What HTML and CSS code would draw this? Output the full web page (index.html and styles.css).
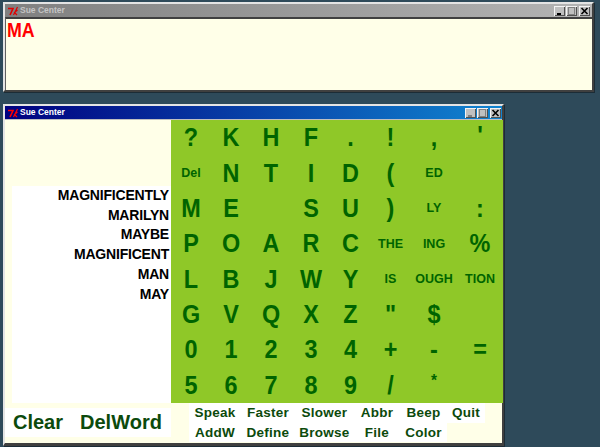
FILE: index.html
```html
<!DOCTYPE html>
<html lang="en">
<head>
<meta charset="utf-8">
<title>Sue Center</title>
<link rel="stylesheet" href="styles.css">
</head>
<body>
<section class="window window-top">
  <header class="titlebar inactive">
    <svg class="tk" viewBox="0 0 12 10" width="12" height="10"><path d="M1 2.5H6L3 9" fill="none" stroke="#e00000" stroke-width="1.6"/><path d="M10.5 1L6.5 9M10.5 4L7.5 6.5L10 9" fill="none" stroke="#e00000" stroke-width="1.2"/></svg>
    <span class="title">Sue Center</span>
    <div class="controls">
      <span class="ctl"><svg viewBox="0 0 11 10" width="11" height="10"><path d="M3 8H7" stroke="#000" stroke-width="2"/></svg></span>
      <span class="ctl"><svg viewBox="0 0 11 10" width="11" height="10"><rect x="2.5" y="1.5" width="6" height="7" fill="none" stroke="#808080"/></svg></span>
      <span class="ctl close"><svg viewBox="0 0 11 10" width="11" height="10"><path d="M2.5 2L8.5 8M8.5 2L2.5 8" stroke="#000" stroke-width="1.6"/></svg></span>
    </div>
  </header>
  <div class="entry"><span class="entry-text">MA</span></div>
</section>

<section class="window window-main">
  <header class="titlebar active">
    <svg class="tk" viewBox="0 0 12 10" width="12" height="10"><path d="M1 2.5H6L3 9" fill="none" stroke="#ff0000" stroke-width="1.6"/><path d="M10.5 1L6.5 9M10.5 4L7.5 6.5L10 9" fill="none" stroke="#ff0000" stroke-width="1.2"/></svg>
    <span class="title">Sue Center</span>
    <div class="controls">
      <span class="ctl"><svg viewBox="0 0 11 10" width="11" height="10"><path d="M3 8H7" stroke="#808080" stroke-width="2"/></svg></span>
      <span class="ctl"><svg viewBox="0 0 11 10" width="11" height="10"><rect x="2.5" y="1.5" width="6" height="7" fill="none" stroke="#808080"/></svg></span>
      <span class="ctl close"><svg viewBox="0 0 11 10" width="11" height="10"><path d="M2.5 2L8.5 8M8.5 2L2.5 8" stroke="#000" stroke-width="1.6"/></svg></span>
    </div>
  </header>
  <div class="body">
    <div class="left">
      <div class="left-top"></div>
      <ul class="words">
        <li>MAGNIFICENTLY</li>
        <li>MARILYN</li>
        <li>MAYBE</li>
        <li>MAGNIFICENT</li>
        <li>MAN</li>
        <li>MAY</li>
      </ul>
      <div class="actions-wrap">
        <div class="actions"><span>Clear</span><span>DelWord</span></div>
      </div>
    </div>
    <div class="right">
      <div class="keys">
        <span>?</span><span>K</span><span>H</span><span>F</span><span>.</span><span>!</span><span>,</span><span class="hi">'</span>
        <span class="sm">Del</span><span>N</span><span>T</span><span>I</span><span>D</span><span>(</span><span class="sm">ED</span><span></span>
        <span>M</span><span>E</span><span></span><span>S</span><span>U</span><span>)</span><span class="sm">LY</span><span>:</span>
        <span>P</span><span>O</span><span>A</span><span>R</span><span>C</span><span class="sm">THE</span><span class="sm">ING</span><span>%</span>
        <span>L</span><span>B</span><span>J</span><span>W</span><span>Y</span><span class="sm">IS</span><span class="sm">OUGH</span><span class="sm">TION</span>
        <span>G</span><span>V</span><span>Q</span><span>X</span><span>Z</span><span>"</span><span>$</span><span></span>
        <span>0</span><span>1</span><span>2</span><span>3</span><span>4</span><span>+</span><span>-</span><span>=</span>
        <span>5</span><span>6</span><span>7</span><span>8</span><span>9</span><span>/</span><span class="star">*</span><span></span>
      </div>
      <div class="commands">
        <span>Speak</span><span>Faster</span><span>Slower</span><span>Abbr</span><span>Beep</span><span>Quit</span>
        <span>AddW</span><span>Define</span><span>Browse</span><span>File</span><span>Color</span>
      </div>
    </div>
  </div>
</section>
</body>
</html>
```

FILE: styles.css
```css
* { box-sizing: border-box; }
html, body { margin: 0; padding: 0; }
body {
  position: relative;
  width: 600px;
  height: 447px;
  overflow: hidden;
  background: #2e4a5a;
  font-family: "Liberation Sans", Arial, sans-serif;
}
.window {
  position: absolute;
  left: 3px;
  display: flex;
  flex-direction: column;
  background: #c0c0c0;
  border: 2px solid;
  border-color: #e4e4e4 #404040 #404040 #e4e4e4;
  box-shadow: 1px 1px 0 #1c2c36;
}
.window-top { top: 2px; width: 591px; height: 90px; }
.window-main { top: 104px; width: 501px; height: 342px; border-bottom-width: 3px; }
.titlebar {
  height: 13px;
  flex: none;
  display: flex;
  align-items: center;
  padding: 0 2px;
  color: #fff;
}
.titlebar.inactive { background: linear-gradient(90deg, #808080, #b4b4b4); color: #c4c4c4; }
.titlebar.active { background: linear-gradient(90deg, #000080, #1084d0); margin-bottom: 1px; padding-right: 1px; }
.tk { flex: none; }
.title { margin-left: 1px; font-size: 8.5px; font-weight: bold; line-height: 13px; }
.controls { margin-left: auto; display: flex; gap: 1px; }
.ctl {
  width: 11px;
  height: 10px;
  background: #c0c0c0;
  display: block;
  box-shadow: inset 1px 1px 0 #f4f4f4, inset -1px -1px 0 #505050;
}
.ctl svg { display: block; }
.ctl.close { margin-left: 1px; }
.entry {
  flex: 1;
  background: #ffffe8;
  border-top: 2px solid #404040;
  border-left: 1px solid #606060;
  color: #ff0000;
  font-size: 21px;
  font-weight: bold;
  line-height: 22px;
  padding-left: 1px;
}
.entry-text { display: inline-block; transform: scaleX(0.85); transform-origin: left center; }
.body { flex: 1; display: flex; background: #ffffe8; min-height: 0; }
.left { width: 166px; flex: none; display: flex; flex-direction: column; }
.left-top { height: 66px; flex: none; }
.words {
  list-style: none;
  margin: 0 0 0 7px;
  padding: 0 2px 0 0;
  height: 217px;
  flex: none;
  background: #fff;
  text-align: right;
  color: #000;
  font-size: 14px;
  font-weight: bold;
  line-height: 19.7px;
  letter-spacing: -0.2px;
}
.actions-wrap { flex: 1; padding-top: 5px; }
.actions {
  height: 29px;
  background: #fff;
  display: flex;
  gap: 17px;
  align-items: center;
  padding-left: 8px;
  color: #0c4a0c;
  font-size: 20px;
  font-weight: bold;
}
.right { width: 332px; flex: none; display: flex; flex-direction: column; }
.keys {
  height: 283px;
  flex: none;
  display: grid;
  grid-template-columns: 40px 40px 40px 40px 39px 41px 46px 46px;
  grid-template-rows: repeat(8, 1fr);
  background: #8fc828;
  color: #006400;
  font-size: 26px;
  font-weight: bold;
  text-align: center;
}
.keys span { display: flex; align-items: center; justify-content: center; transform: scaleX(0.9); }
.keys .sm { font-size: 12.5px; transform: none; }
.keys .hi { align-items: flex-start; }
.keys .star { font-size: 17px; align-items: flex-start; padding-top: 3px; }
.commands {
  margin-left: 18px;
  display: grid;
  grid-template-columns: 52px 54px 59px 46px 47px 38px;
  grid-template-rows: 20px 19px;
  justify-content: start;
  color: #0c4a0c;
  font-size: 13.5px;
  font-weight: bold;
  letter-spacing: 0.25px;
}
.commands span { background: #fff; text-align: center; line-height: 20px; }
```
